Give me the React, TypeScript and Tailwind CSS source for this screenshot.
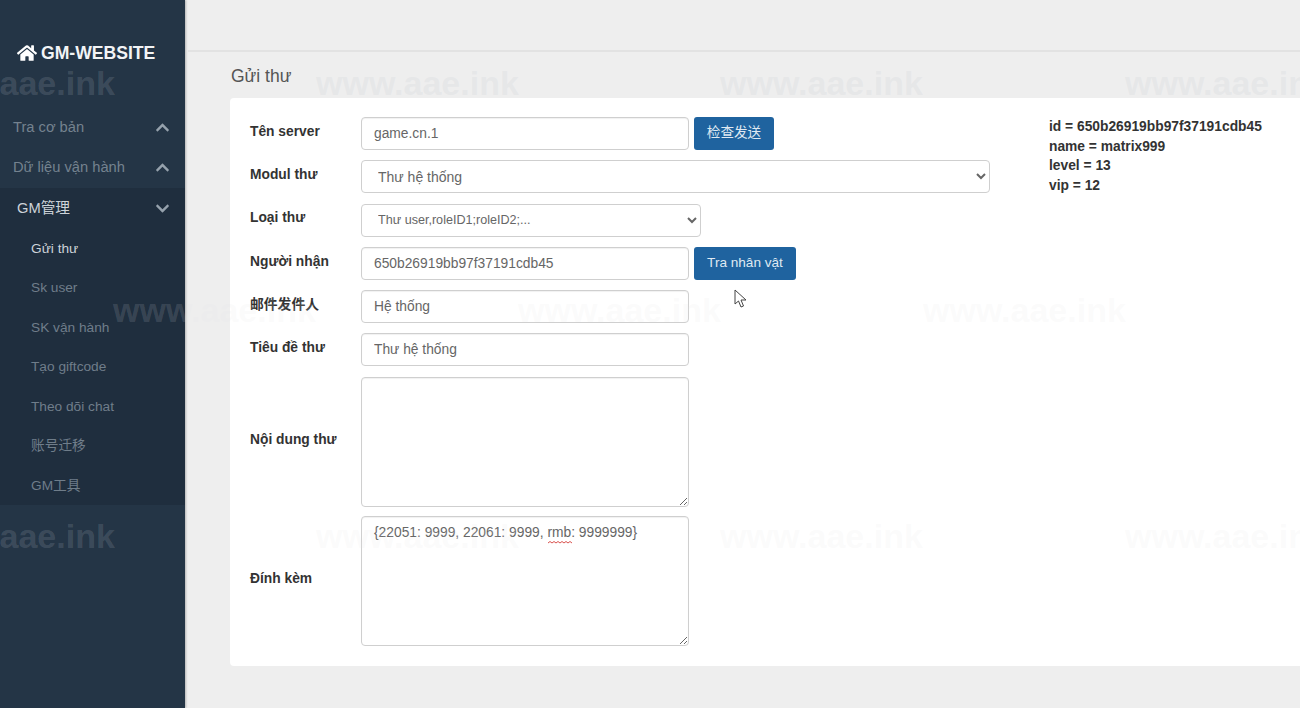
import React from "react";
import { FaChevronDown, FaChevronUp, FaHome } from "react-icons/fa";

const font = { fontFamily: '"Liberation Sans", "Noto Sans CJK SC", Arial, sans-serif' };

const subItems = ["Gửi thư", "Sk user", "SK vận hành", "Tạo giftcode", "Theo dõi chat", "账号迁移", "GM工具"];

const inputClass = "h-[33px] w-[328px] rounded-[4px] border border-[#cfcfcf] bg-white px-3 text-[13.8px] text-[#666] shadow-[inset_0_1px_1px_rgba(0,0,0,0.06)] outline-none";
const areaClass = "h-[130px] w-[328px] resize-y rounded-[4px] border border-[#cfcfcf] bg-white px-3 py-[6px] text-[13.8px] text-[#666] shadow-[inset_0_1px_1px_rgba(0,0,0,0.06)] outline-none";
const buttonClass = "h-[33px] rounded-[3px] bg-[#1f639f] text-center text-[13.6px] text-[#dfe9f2]";

const watermarks = [
  { x: -88, y: 64, soft: true },
  { x: 316, y: 64, soft: false },
  { x: 720, y: 64, soft: false },
  { x: 1125, y: 64, soft: false },
  { x: 113, y: 291, soft: true },
  { x: 518, y: 291, soft: true },
  { x: 923, y: 291, soft: true },
  { x: -88, y: 517, soft: true },
  { x: 316, y: 517, soft: true },
  { x: 720, y: 517, soft: true },
  { x: 1125, y: 517, soft: true },
];

function NavItem({ label, open }: { label: string; open?: boolean }) {
  return (
    <div className={`flex h-[40px] items-center justify-between pr-[15px] ${open ? "pl-[17px] text-[#cdd3d9]" : "pl-[13px] text-[#74828f]"}`}>
      <span className="text-[14.7px]">{label}</span>
      {open ? <FaChevronDown size={15} className="text-[#96a2ad]" /> : <FaChevronUp size={15} className="text-[#96a2ad]" />}
    </div>
  );
}

function Sidebar() {
  return (
    <aside className="flex h-full w-[185px] shrink-0 flex-col bg-[#243546] shadow-[1px_0_2px_rgba(0,0,0,0.25)]">
      <div className="flex h-[107px] items-start gap-1 pl-[17px] pt-[43px] text-white">
        <FaHome size={20} />
        <span className="text-[17.6px] leading-[21px] font-bold text-[#f2f4f6]">GM-WEBSITE</span>
      </div>
      <NavItem label="Tra cơ bản" />
      <NavItem label="Dữ liệu vận hành" />
      <div className="mt-[1px] bg-[#1f2e3e]">
        <NavItem label="GM管理" open />
        {subItems.map((item, index) => (
          <div key={item} className={`flex h-[39.5px] items-center pl-[31px] pt-[3px] text-[13.7px] ${index === 0 ? "text-[#cdd3d9]" : "text-[#6f7d8a]"}`}>
            {item}
          </div>
        ))}
      </div>
    </aside>
  );
}

function Row({ label, children }: { label: string; children: React.ReactNode }) {
  return (
    <div className="flex items-center">
      <label className="w-[111px] shrink-0 pb-[3px] text-[13.8px] font-bold text-[#333]">{label}</label>
      {children}
    </div>
  );
}

function MailForm() {
  return (
    <div className="flex w-[740px] flex-col gap-[10.3px]">
      <Row label="Tên server">
        <input readOnly value="game.cn.1" className={inputClass} />
        <button className={`${buttonClass} ml-[5px] w-[80px]`}>检查发送</button>
      </Row>
      <Row label="Modul thư">
        <select className="h-[33px] w-[629px] rounded-[4px] border border-[#cfcfcf] bg-white px-3 text-[14px] text-[#666] outline-none">
          <option>Thư hệ thống</option>
        </select>
      </Row>
      <Row label="Loại thư">
        <select className="h-[33px] w-[340px] rounded-[4px] border border-[#cfcfcf] bg-white px-3 text-[12.6px] text-[#666] outline-none">
          <option>Thư user,roleID1;roleID2;...</option>
        </select>
      </Row>
      <Row label="Người nhận">
        <input readOnly value="650b26919bb97f37191cdb45" className={inputClass} />
        <button className={`${buttonClass} ml-[5px] w-[102px]`}>Tra nhân vật</button>
      </Row>
      <Row label="邮件发件人">
        <input readOnly value="Hệ thống" className={inputClass} />
      </Row>
      <Row label="Tiêu đề thư">
        <input readOnly value="Thư hệ thống" className={inputClass} />
      </Row>
      <Row label="Nội dung thư">
        <textarea readOnly className={areaClass} />
      </Row>
      <div className="-mt-px">
        <Row label="Đính kèm">
          <div className="relative flex">
            <textarea readOnly spellCheck={false} value="{22051: 9999, 22061: 9999, rmb: 9999999}" className={areaClass} />
            <svg width="24" height="3" viewBox="0 0 24 3" className="absolute left-[187px] top-[25px]">
              <path d="M0 2 L2 0.5 L4 2 L6 0.5 L8 2 L10 0.5 L12 2 L14 0.5 L16 2 L18 0.5 L20 2 L22 0.5 L24 2" fill="none" stroke="#d9534f" strokeWidth="1" />
            </svg>
          </div>
        </Row>
      </div>
    </div>
  );
}

export default function App() {
  return (
    <div className="relative flex h-[708px] w-[1300px] overflow-hidden bg-[#eeeeee]" style={font}>
      <Sidebar />
      <main className="flex min-w-0 flex-1 flex-col">
        <div className="ml-[3px] h-[52px] shrink-0 border-b-2 border-[#e2e2e2]" />
        <h1 className="ml-[46px] mt-[12px] h-[34px] text-[17.5px] leading-[24px] text-[#555]">Gửi thư</h1>
        <section className="ml-[45px] flex h-[568px] rounded-l-[4px] bg-white pl-[20px] pt-[19px]">
          <MailForm />
          <div className="ml-[59px] text-[13.8px] leading-[19.7px] font-bold text-[#333]">
            <div>id = 650b26919bb97f37191cdb45</div>
            <div>name = matrix999</div>
            <div>level = 13</div>
            <div>vip = 12</div>
          </div>
        </section>
      </main>

      {/* watermark + mouse cursor lie over the page */}
      <div className="pointer-events-none absolute inset-0 overflow-hidden">
        {watermarks.map((mark) => (
          <span
            key={`${mark.x}-${mark.y}`}
            className={`absolute text-[34px] leading-[38px] font-bold whitespace-nowrap ${mark.soft ? "text-[#e0e4e6]/15" : "text-[#c4ccd0]/20"}`}
            style={{ left: mark.x, top: mark.y }}
          >
            www.aae.ink
          </span>
        ))}
        <svg width="15" height="20" viewBox="0 0 15 20" className="absolute left-[734px] top-[289px]">
          <path d="M1 1 L1 15 L4.5 12 L7 18 L9.5 17 L7 11 L12 11 Z" fill="#fff" stroke="#444" strokeWidth="1" />
        </svg>
      </div>
    </div>
  );
}
